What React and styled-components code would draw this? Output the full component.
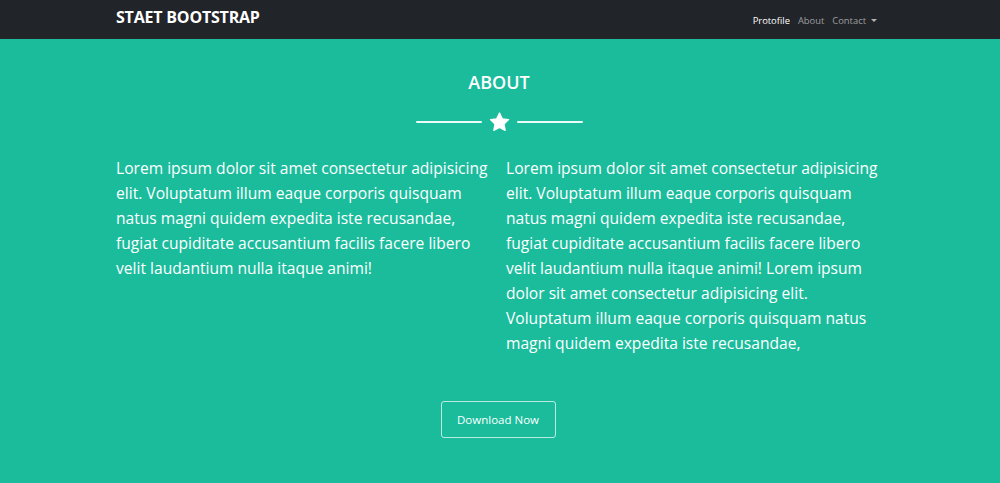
import React from 'react';
import styled, { createGlobalStyle } from 'styled-components';

const GlobalStyle = createGlobalStyle`
  html, body {
    margin: 0;
    padding: 0;
    background: #1abc9c;
    font-family: "Open Sans", "Noto Sans", sans-serif;
  }
`;

const paragraph =
  'Lorem ipsum dolor sit amet consectetur adipisicing elit. Voluptatum illum eaque corporis quisquam natus magni quidem expedita iste recusandae, fugiat cupiditate accusantium facilis facere libero velit laudantium nulla itaque animi!';

const App = () => {
  return (
    <Page>
      <GlobalStyle />
      <NavBar>
        <NavInner>
          <Brand>STAET BOOTSTRAP</Brand>
          <NavLinks>
            <NavLink active>Protofile</NavLink>
            <NavLink>About</NavLink>
            <NavLink>
              Contact <Caret />
            </NavLink>
          </NavLinks>
        </NavInner>
      </NavBar>
      <AboutSection>
        <Title>ABOUT</Title>
        <Divider>
          <DividerLine />
          <svg width="21" height="20" viewBox="0 0 24 23">
            <path
              d="M12 1.2l3.2 6.6 7.2 1-5.2 5.1 1.3 7.2L12 17.7l-6.5 3.4 1.3-7.2L1.6 8.8l7.2-1z"
              fill="#ffffff"
              stroke="#ffffff"
              strokeWidth="1.5"
              strokeLinejoin="round"
            />
          </svg>
          <DividerLine />
        </Divider>
        <Columns>
          <Text>{paragraph}</Text>
          <Text>
            {paragraph +
              ' Lorem ipsum dolor sit amet consectetur adipisicing elit. Voluptatum illum eaque corporis quisquam natus magni quidem expedita iste recusandae,'}
          </Text>
        </Columns>
        <DownloadButton>Download Now</DownloadButton>
      </AboutSection>
    </Page>
  );
};

const Page = styled.div`
  min-height: 483px;
  background: #1abc9c;
`;

const NavBar = styled.nav`
  background: #212428;
  height: 39px;
`;

const NavInner = styled.div`
  width: 768px;
  margin: 0 auto;
  height: 100%;
  display: flex;
  align-items: center;
  justify-content: space-between;
`;

const Brand = styled.div`
  color: #ffffff;
  font-weight: 700;
  font-size: 16px;
  letter-spacing: -0.2px;
  margin-top: -5px;
`;

const NavLinks = styled.div`
  display: flex;
  gap: 8px;
  margin-right: 7px;
  margin-top: 1px;
`;

const NavLink = styled.span`
  color: ${(p) => (p.active ? '#ffffff' : 'rgba(255,255,255,0.55)')};
  font-size: 9.4px;
  display: flex;
  align-items: center;
  gap: 5px;
`;

const Caret = styled.span`
  display: inline-block;
  width: 0;
  height: 0;
  border-left: 3px solid transparent;
  border-right: 3px solid transparent;
  border-top: 3px solid rgba(255,255,255,0.65);
`;

const AboutSection = styled.section`
  display: flex;
  flex-direction: column;
  align-items: center;
  padding-top: 30px;
  color: #ffffff;
`;

const Title = styled.h2`
  margin: 0;
  font-size: 18px;
  font-weight: 600;
  line-height: 26px;
  margin-left: -2px;
`;

const Divider = styled.div`
  display: flex;
  align-items: center;
  gap: 7px;
  margin-top: 17px;
  margin-left: -2px;
`;

const DividerLine = styled.div`
  width: 66px;
  height: 2.5px;
  background: #eafcf7;
  border-radius: 1px;
`;

const Columns = styled.div`
  width: 768px;
  display: grid;
  grid-template-columns: 1fr 1fr;
  column-gap: 12px;
  margin-top: 24px;
`;

const Text = styled.p`
  margin: 0;
  font-size: 15.6px;
  line-height: 25px;
`;

const DownloadButton = styled.button`
  margin-top: 45px;
  margin-left: -4px;
  width: 115px;
  height: 37px;
  background: transparent;
  border: 1px solid rgba(255,255,255,0.7);
  border-radius: 3px;
  color: #ffffff;
  font-family: "Open Sans", "Noto Sans", sans-serif;
  font-size: 11.5px;
`;

export default App;
